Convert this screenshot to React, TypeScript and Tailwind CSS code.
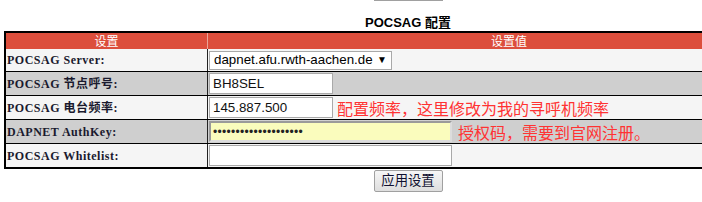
import React from 'react';

const labelFont = "font-['Liberation_Serif','Noto_Sans_CJK_SC',serif]";
const sansFont = "font-['Liberation_Sans','Noto_Sans_CJK_SC',sans-serif]";

type Row = {
  label: string;
  shade: 'light' | 'dark';
  field: React.ReactNode;
  note?: string;
};

function TextBox({ value, wide }: { value: string; wide?: boolean }) {
  return (
    <div
      className={`${wide ? 'w-[243px]' : 'w-[124px]'} h-[21px] border border-[#a9a9a9] bg-white flex items-center px-[3px] text-[13.33px] text-[#111] ${sansFont}`}
    >
      {value}
    </div>
  );
}

function App() {
  const rows: Row[] = [
    {
      label: 'POCSAG Server:',
      shade: 'light',
      field: (
        <div
          className={`w-[183px] h-[19px] border border-[#a9a9a9] bg-white flex items-center justify-between pl-[4px] pr-[4px] text-[13.33px] text-black ${sansFont}`}
        >
          <span>dapnet.afu.rwth-aachen.de</span>
          <span className="text-[10px] leading-none">▼</span>
        </div>
      ),
    },
    { label: 'POCSAG 节点呼号:', shade: 'dark', field: <TextBox value="BH8SEL" /> },
    {
      label: 'POCSAG 电台频率:',
      shade: 'light',
      field: <TextBox value="145.887.500" />,
      note: '配置频率，这里修改为我的寻呼机频率',
    },
    {
      label: 'DAPNET AuthKey:',
      shade: 'dark',
      field: (
        <div className="w-[243px] h-[21px] border-2 border-t-[#9a9a9a] border-l-[#9a9a9a] border-r-[#dcdcdc] border-b-[#dcdcdc] bg-[#fafcbd] flex items-center pl-[2px] text-[12px] tracking-[0.3px] text-[#222] font-['Liberation_Sans',sans-serif]">
          ••••••••••••••••••••
        </div>
      ),
      note: '授权码，需要到官网注册。',
    },
    { label: 'POCSAG Whitelist:', shade: 'light', field: <TextBox value="" wide /> },
  ];

  return (
    <div className="w-full h-screen overflow-hidden bg-white">
      <div className="w-[808px] ml-[4px] flex flex-col items-center">
        {/* bottom edge of the previous section's button */}
        <div className="w-[69px] h-[2px] -mt-px border border-t-0 border-[#a0a0a0] bg-[#e8e8e8]" />

        <h2 className={`mt-[13px] h-[17px] leading-[17px] text-[13px] font-bold text-black ${sansFont}`}>
          POCSAG 配置
        </h2>

        <div className="w-[808px] border-2 border-black">
          <div className="flex h-[16px] bg-[#dc4e3c] text-white text-[12px] leading-[16px] font-['Noto_Sans_CJK_SC',sans-serif]">
            <div className="w-[202px] border-r border-[#e9a498] text-center">设置</div>
            <div className="flex-1 text-center">设置值</div>
          </div>

          {rows.map((row, i) => (
            <div
              key={row.label}
              className={`flex ${i === 0 ? 'h-[22px]' : 'h-[24px] border-t border-black'} ${
                row.shade === 'light' ? 'bg-[#f5f5f5]' : 'bg-[#cfcfcf]'
              }`}
            >
              <div
                className={`w-[202px] border-r border-[#222] flex items-center pl-[1px] text-[12px] tracking-[0.5px] font-bold text-[#1a1a2e] ${labelFont}`}
              >
                {row.label}
              </div>
              <div className="flex-1 flex items-center pl-[1px]">
                {row.field}
                {row.note && (
                  <span
                    className={`${i === 2 ? 'ml-[4px]' : 'ml-[6px]'} text-[16px] text-[#ff3333] font-['Noto_Sans_CJK_SC',sans-serif]`}
                  >
                    {row.note}
                  </span>
                )}
              </div>
            </div>
          ))}
        </div>

        <button
          className={`mt-[1px] w-[69px] h-[22px] border border-[#a0a0a0] rounded-[2px] bg-gradient-to-b from-[#f6f6f6] to-[#dedede] text-[13.33px] text-[#101030] ${sansFont}`}
        >
          应用设置
        </button>
      </div>
    </div>
  );
}

export default App;
